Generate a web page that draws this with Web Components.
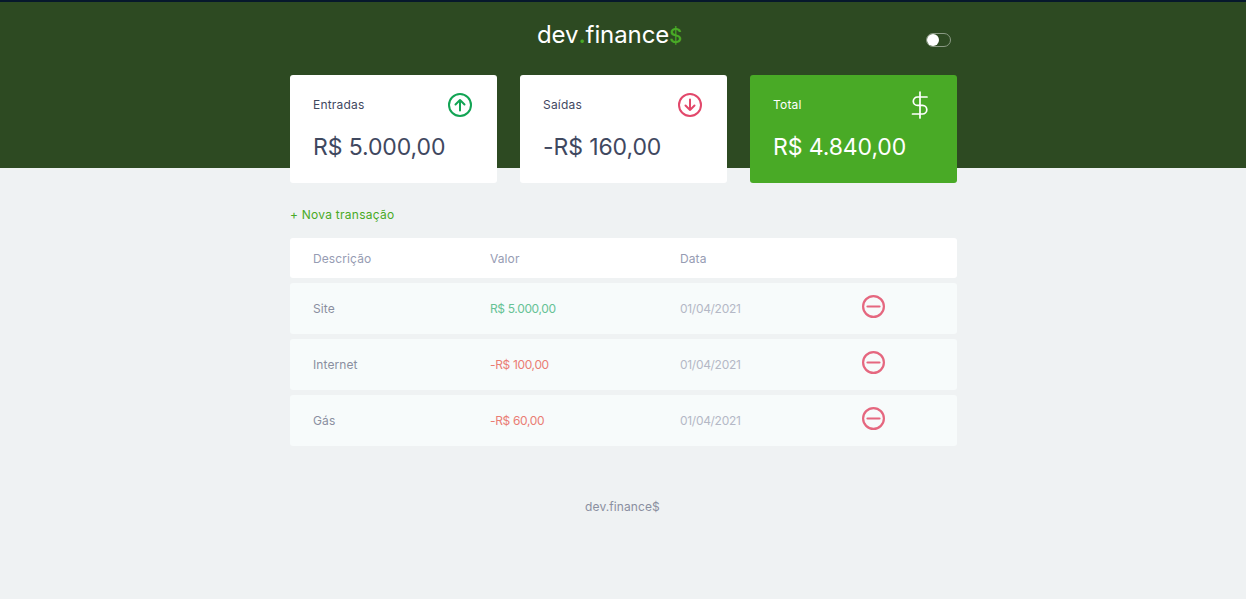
<!DOCTYPE html>
<html lang="pt-BR">
<head>
<meta charset="utf-8">
<title>dev.finance$</title>
<style>
  html, body { margin: 0; height: 100%; }
  body {
    background: #eff2f3;
    font-family: Inter, "Liberation Sans", sans-serif;
    color: #363f5f;
    overflow: hidden;
  }
  main { display: block; width: 667px; margin: -93px 0 0 290px; }
</style>
</head>
<body>
<app-header></app-header>
<main>
  <summary-cards>
    <summary-card label="Entradas" icon="in">R$ 5.000,00</summary-card>
    <summary-card label="Saídas" icon="out">-R$ 160,00</summary-card>
    <summary-card label="Total" icon="total" total>R$ 4.840,00</summary-card>
  </summary-cards>
  <new-link>+ Nova transação</new-link>
  <transaction-table>
    <transaction-row description="Site" amount="R$ 5.000,00" date="01/04/2021" kind="income"></transaction-row>
    <transaction-row description="Internet" amount="-R$ 100,00" date="01/04/2021" kind="expense"></transaction-row>
    <transaction-row description="Gás" amount="-R$ 60,00" date="01/04/2021" kind="expense"></transaction-row>
  </transaction-table>
</main>
<app-footer>dev.finance$</app-footer>

<script>
/** Green top band with the logo and the theme toggle */
class AppHeader extends HTMLElement {
  constructor() {
    super();
    this.attachShadow({ mode: 'open' });
    this.shadowRoot.innerHTML = `
      <style>
        :host {
          display: block;
          height: 166px;
          border-top: 2px solid #06182c;
          background: #2d4a22;
        }
        .bar {
          display: flex;
          align-items: flex-start;
          padding-left: 537px;
        }
        .logo {
          width: 389px;
          margin-top: 16px;
          font-size: 24px;
          line-height: 34px;
          font-weight: 400;
          letter-spacing: -0.1px;
          color: #fff;
        }
        .logo span { color: #49aa26; font-weight: 500; }
        .logo .cash { font-size: 20px; }
        .toggle {
          position: relative;
          box-sizing: border-box;
          width: 25px;
          height: 14px;
          margin-top: 31px;
          border: 1px solid #8a9a84;
          border-radius: 7px;
        }
        .toggle::before {
          content: '';
          position: absolute;
          left: 0;
          top: 0;
          width: 12px;
          height: 12px;
          border-radius: 50%;
          background: #fff;
        }
      </style>
      <div class="bar">
        <div class="logo">dev<span>.</span>finance<span class="cash">$</span></div>
        <div class="toggle"></div>
      </div>
    `;
  }
}

/** Row of the three balance cards */
class SummaryCards extends HTMLElement {
  constructor() {
    super();
    this.attachShadow({ mode: 'open' });
    this.shadowRoot.innerHTML = `
      <style>
        :host {
          display: grid;
          grid-template-columns: repeat(3, 207px);
          column-gap: 23px;
        }
      </style>
      <slot></slot>
    `;
  }
}

const CARD_ICONS = {
  in: `<svg width="24" height="24" viewBox="0 0 24 24" fill="none" stroke="#12a454" stroke-width="2" stroke-linecap="round" stroke-linejoin="round"><circle cx="12" cy="12" r="11"/><path d="M12 17.5V7M7.5 11.5 12 7l4.500 4.500"/></svg>`,
  out: `<svg width="24" height="24" viewBox="0 0 24 24" fill="none" stroke="#e2486b" stroke-width="2" stroke-linecap="round" stroke-linejoin="round"><circle cx="12" cy="12" r="11"/><path d="M12 6.500V17M7.500 12.500 12 17l4.500-4.500"/></svg>`,
  total: `<svg class="dollar" width="18" height="28" viewBox="0 0 18 28" fill="none" stroke="#fff" stroke-width="1.700" stroke-linecap="round" stroke-linejoin="round"><path d="M9 1v26M16 6H6.500a4.200 4.200 0 0 0 0 8.400h5a4.300 4.300 0 0 1 0 8.600H1.500"/></svg>`
};

/** One balance card: label and icon on top, the amount in the slot */
class SummaryCard extends HTMLElement {
  constructor() {
    super();
    this.attachShadow({ mode: 'open' });
  }

  connectedCallback() {
    const icon = CARD_ICONS[this.getAttribute('icon')] || '';
    this.shadowRoot.innerHTML = `
      <style>
        :host {
          display: block;
          box-sizing: border-box;
          height: 108px;
          padding: 18px 25px 0 23px;
          background: #fff;
          border-radius: 3px;
          color: #3f485f;
        }
        :host([total]) { background: #49aa26; color: #fff; }
        .head {
          display: flex;
          align-items: center;
          justify-content: space-between;
          height: 24px;
          font-size: 12px;
          line-height: 22px;
          letter-spacing: 0.2px;
        }
        .head span { margin-bottom: 1px; }
        svg { display: block; }
        .dollar { margin-right: 3px; }
        .value {
          margin-top: 15px;
          font-size: 23px;
          line-height: 30px;
          letter-spacing: -0.1px;
        }
      </style>
      <div class="head"><span>${this.getAttribute('label')}</span>${icon}</div>
      <div class="value"><slot></slot></div>
    `;
  }
}

/** Green "new transaction" link */
class NewLink extends HTMLElement {
  constructor() {
    super();
    this.attachShadow({ mode: 'open' });
    this.shadowRoot.innerHTML = `
      <style>
        :host {
          display: block;
          margin-top: 23px;
          height: 32px;
          font-size: 12px;
          line-height: 18px;
          letter-spacing: 0.25px;
          color: #49aa26;
        }
      </style>
      <slot></slot>
    `;
  }
}

/** Header row and the slot for the transaction rows */
class TransactionTable extends HTMLElement {
  constructor() {
    super();
    this.attachShadow({ mode: 'open' });
    this.shadowRoot.innerHTML = `
      <style>
        :host {
          display: flex;
          flex-direction: column;
          gap: 5px;
        }
        .head {
          display: grid;
          grid-template-columns: 177px 190px 1fr;
          align-items: center;
          height: 40px;
          padding-left: 23px;
          background: #fff;
          border-radius: 3px;
          font-size: 12px;
          letter-spacing: 0.1px;
          color: #969cb3;
        }
      </style>
      <div class="head"><span>Descrição</span><span>Valor</span><span>Data</span></div>
      <slot></slot>
    `;
  }
}

/**
 * One transaction line
 * @element transaction-row
 */
class TransactionRow extends HTMLElement {
  constructor() {
    super();
    this.attachShadow({ mode: 'open' });
  }

  connectedCallback() {
    this.shadowRoot.innerHTML = `
      <style>
        :host {
          display: grid;
          grid-template-columns: 177px 190px 182px 1fr;
          align-items: center;
          height: 51px;
          padding-left: 23px;
          background: #f7fbfb;
          border-radius: 3px;
          font-size: 12px;
          letter-spacing: 0.1px;
          color: #8a8fa0;
        }
        .income { color: #66c295; letter-spacing: -0.35px; }
        .expense { color: #ea7d74; letter-spacing: -0.35px; }
        .date { color: #b4b8c6; letter-spacing: -0.3px; }
        svg { display: block; margin-bottom: 4px; }
      </style>
      <span>${this.getAttribute('description')}</span>
      <span class="${this.getAttribute('kind')}">${this.getAttribute('amount')}</span>
      <span class="date">${this.getAttribute('date')}</span>
      <svg width="23" height="23" viewBox="0 0 23 23" fill="none" stroke="#e5677f" stroke-width="2.200" stroke-linecap="round"><circle cx="11.500" cy="11.500" r="10.400"/><path d="M5.500 11.500h12"/></svg>
    `;
  }
}

/** Muted footer line */
class AppFooter extends HTMLElement {
  constructor() {
    super();
    this.attachShadow({ mode: 'open' });
    this.shadowRoot.innerHTML = `
      <style>
        :host {
          display: block;
          width: 667px;
          margin: 52px 0 0 289px;
          text-align: center;
          font-size: 12px;
          line-height: 18px;
          letter-spacing: 0.1px;
          color: #8a8fa0;
        }
      </style>
      <slot></slot>
    `;
  }
}

customElements.define('app-header', AppHeader);
customElements.define('summary-cards', SummaryCards);
customElements.define('summary-card', SummaryCard);
customElements.define('new-link', NewLink);
customElements.define('transaction-table', TransactionTable);
customElements.define('transaction-row', TransactionRow);
customElements.define('app-footer', AppFooter);
</script>
</body>
</html>
